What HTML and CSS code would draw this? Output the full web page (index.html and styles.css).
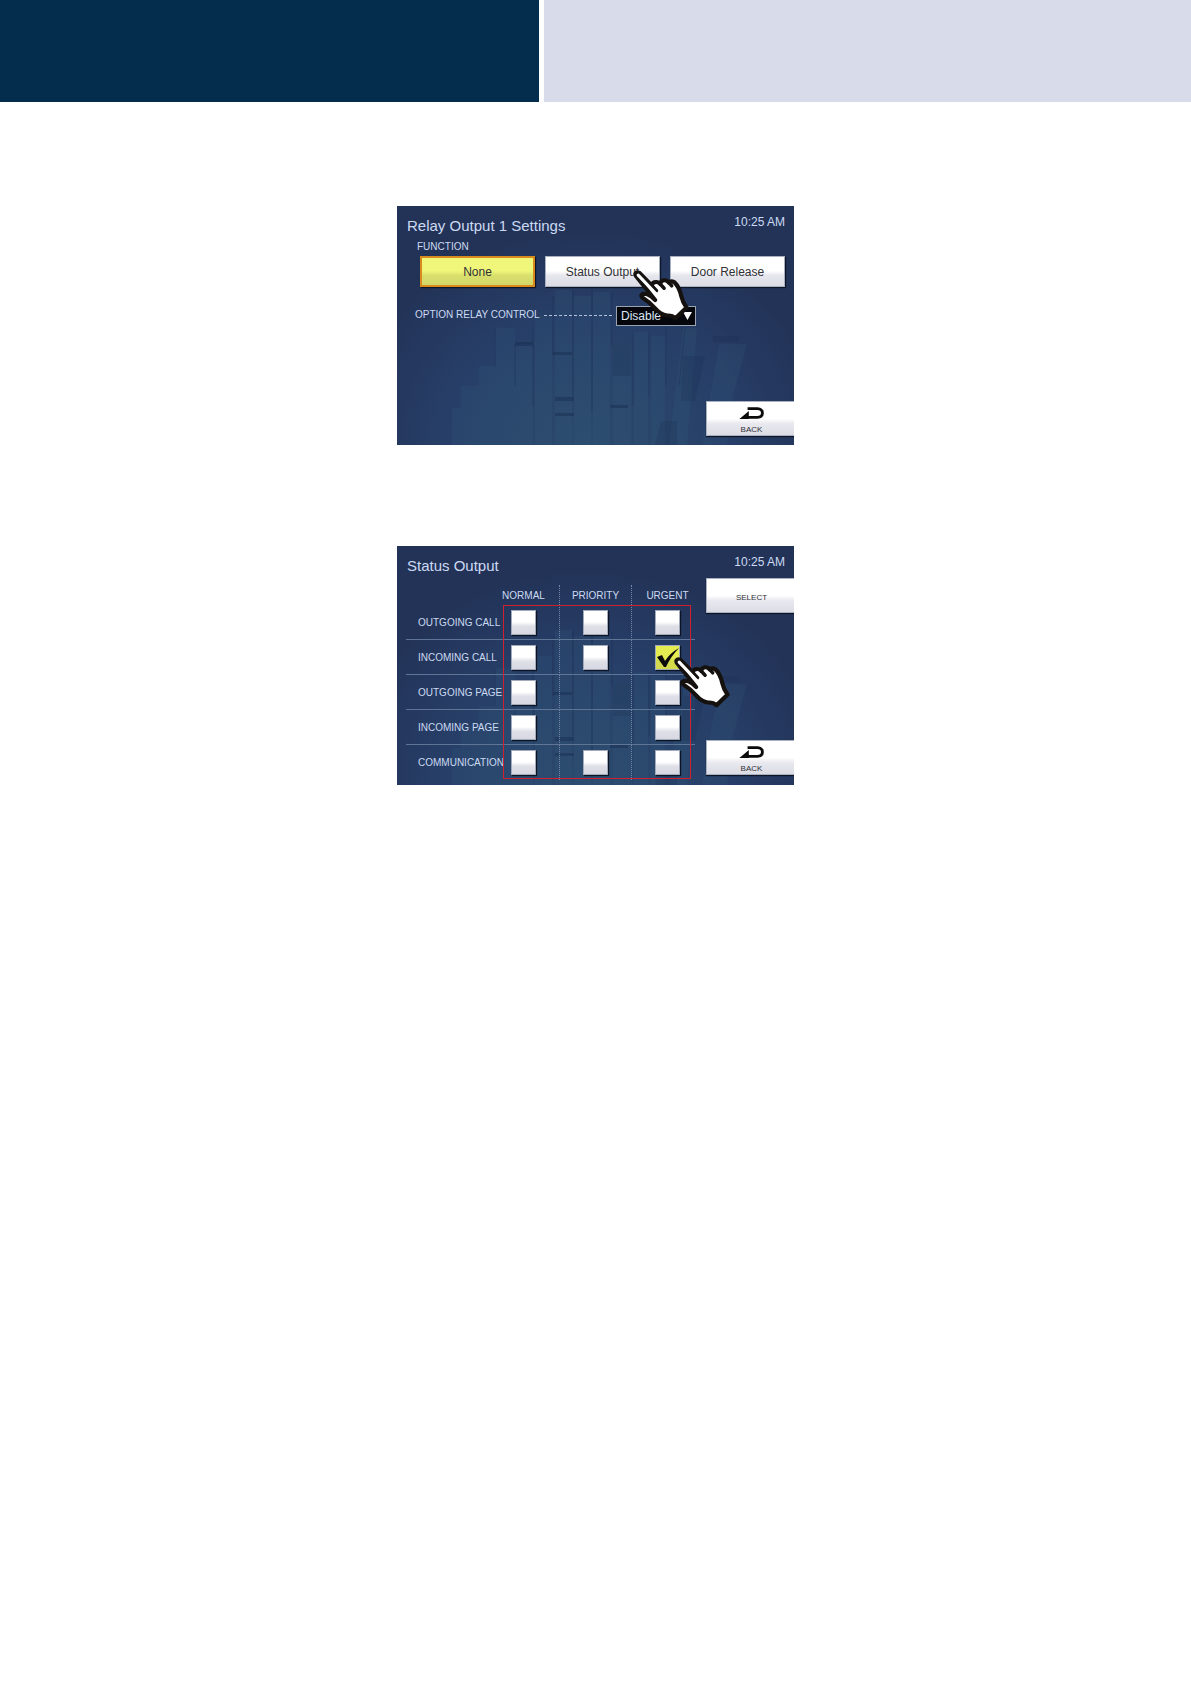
FILE: index.html
```html
<!DOCTYPE html>
<html lang="en">
<head>
<meta charset="utf-8">
<meta name="viewport" content="width=device-width, initial-scale=1">
<title>Relay Output Settings</title>
<link rel="stylesheet" href="styles.css">
</head>
<body>
<svg class="defs" aria-hidden="true">
  <symbol id="hand" viewBox="12 16 162 146">
    <path d="M20 32Q16 22 26 22Q31 22 35 28L66 60Q68 50 79 50Q87 50 90 55Q94 44 105 45Q112 46 115 51Q122 45 132 51Q146 64 152 92Q156 110 167 124L135 155Q126 146 110 147Q92 144 76 126Q60 108 38 94Q33 86 42 84Q54 84 64 91L76 102Z" fill="#fff" stroke="#15110f" stroke-width="12" stroke-linejoin="round"/>
    <path d="M66 60L80 75M90 55L102 68M115 51L124 61" fill="none" stroke="#15110f" stroke-width="10" stroke-linecap="round"/>
    <path d="M27 30L86 92" fill="none" stroke="#fff" stroke-width="9" stroke-linecap="round"/>
  </symbol>
  <symbol id="return" viewBox="146 50 80 38">
    <path d="M172 55H203Q219 56 219 69Q219 82 203 83H168" fill="none" stroke="#0b0b0b" stroke-width="9"/>
    <path d="M146 88L176 63V88Z" fill="#0b0b0b"/>
  </symbol>
  <symbol id="blocks" viewBox="0 0 397 239" preserveAspectRatio="none">
    <g fill="#3d6a8a" fill-opacity=".13">
      <path d="M55 239V202H64V180H82V160H98V122H118V239Z"/>
      <path d="M118 239V138H136V239ZM138 239V110H155V239ZM158 239V84H175V239ZM177 239V90H194V239Z"/>
      <path d="M196 239V86H213V239ZM216 239V138H234V239ZM237 239V126H251V239ZM254 239V130H268V239Z"/>
      <path d="M272 239L286 122H300L290 239ZM305 239L322 138H350L336 190L330 239Z"/>
    </g>
    <g fill="none" stroke="#16284a" stroke-opacity=".35">
      <path d="M98 122V160M118 138V180M136 120V200M156 90V150M176 84V190M195 80V205M215 86V140M236 128V200M252 126V190M269 120V180M288 122L282 180"/>
    </g>
    <g fill="#14284a" fill-opacity=".4">
      <path d="M118 136H136V140H118ZM156 146H175V149H156ZM158 191H177V195H158ZM158 207H177V210H158ZM213 199H231V202H213Z"/>
      <path d="M216 138H234V170H216ZM286 150H308L298 195H284ZM316 130H342V136H316ZM264 215H280V239H258Z" fill-opacity=".18"/>
    </g>
  </symbol>
</svg>

<header class="banner">
  <div class="banner-chapter"></div>
  <div class="banner-title"></div>
</header>

<main class="content">
  <section class="screen" aria-labelledby="relay-title">
    <svg class="backdrop" aria-hidden="true"><use href="#blocks"/></svg>
    <div class="screen-head">
      <h2 id="relay-title">Relay Output 1 Settings</h2>
      <time datetime="10:25">10:25 AM</time>
    </div>
    <h3 class="group-label" id="function-label">FUNCTION</h3>
    <div class="choices" role="group" aria-labelledby="function-label">
      <button class="choice selected" type="button">None</button>
      <button class="choice" type="button">Status Output</button>
      <button class="choice" type="button">Door Release</button>
    </div>
    <div class="option">
      <label for="relay-control">OPTION RELAY CONTROL</label>
      <span class="leader"></span>
      <span class="dropdown">
        <select id="relay-control"><option>Disable</option><option>Enable</option></select>
        <svg viewBox="0 0 10 9" aria-hidden="true"><path d="M0 0H10L5 9Z" fill="#fff"/></svg>
      </span>
    </div>
    <button class="side-button back" type="button"><svg aria-hidden="true"><use href="#return"/></svg>BACK</button>
    <svg class="pointer on-status" aria-hidden="true"><use href="#hand"/></svg>
  </section>

  <section class="screen" aria-labelledby="status-title">
    <svg class="backdrop" aria-hidden="true"><use href="#blocks"/></svg>
    <div class="screen-head">
      <h2 id="status-title">Status Output</h2>
      <time datetime="10:25">10:25 AM</time>
    </div>
    <div class="screen-body">
      <div class="matrix">
        <table>
          <colgroup><col class="col-label"><col class="col-state"><col class="col-state"><col></colgroup>
          <thead>
            <tr><td></td><th scope="col">NORMAL</th><th scope="col">PRIORITY</th><th scope="col">URGENT</th></tr>
          </thead>
          <tbody>
            <tr><th scope="row">OUTGOING CALL</th>
              <td><input type="checkbox" aria-label="Outgoing call, normal"></td>
              <td><input type="checkbox" aria-label="Outgoing call, priority"></td>
              <td><input type="checkbox" aria-label="Outgoing call, urgent"></td></tr>
            <tr><th scope="row">INCOMING CALL</th>
              <td><input type="checkbox" aria-label="Incoming call, normal"></td>
              <td><input type="checkbox" aria-label="Incoming call, priority"></td>
              <td><span class="tick"><input type="checkbox" aria-label="Incoming call, urgent" checked><svg viewBox="0 0 25 25" aria-hidden="true"><path d="M2 12L7 10L10 16Q15 8 24 3Q16 11 11 22H9Z" fill="#0b0b0b"/></svg></span></td></tr>
            <tr><th scope="row">OUTGOING PAGE</th>
              <td><input type="checkbox" aria-label="Outgoing page, normal"></td>
              <td></td>
              <td><input type="checkbox" aria-label="Outgoing page, urgent"></td></tr>
            <tr><th scope="row">INCOMING PAGE</th>
              <td><input type="checkbox" aria-label="Incoming page, normal"></td>
              <td></td>
              <td><input type="checkbox" aria-label="Incoming page, urgent"></td></tr>
            <tr><th scope="row">COMMUNICATION</th>
              <td><input type="checkbox" aria-label="Communication, normal"></td>
              <td><input type="checkbox" aria-label="Communication, priority"></td>
              <td><input type="checkbox" aria-label="Communication, urgent"></td></tr>
          </tbody>
        </table>
        <div class="highlight"></div>
      </div>
      <div class="side">
        <button class="side-button" type="button">SELECT</button>
        <button class="side-button" type="button"><svg aria-hidden="true"><use href="#return"/></svg>BACK</button>
      </div>
    </div>
    <svg class="pointer on-urgent" aria-hidden="true"><use href="#hand"/></svg>
  </section>
</main>
</body>
</html>
```
FILE: styles.css
```css
* { box-sizing: border-box; }

body {
  margin: 0;
  background: #fff;
  font-family: "Liberation Sans", Arial, sans-serif;
}

.defs { position: absolute; width: 0; height: 0; }

/* page banner */
.banner {
  display: grid;
  grid-template-columns: 539fr 647fr;
  gap: 5px;
  height: 102px;
}
.banner-chapter { background: #042d4d; }
.banner-title { background: #d7dbea; }

.content {
  display: flex;
  flex-direction: column;
  align-items: center;
  gap: 101px;
  padding: 104px 16px;
}

/* device screens */
.screen {
  position: relative;
  isolation: isolate;
  display: flex;
  flex-direction: column;
  width: 100%;
  max-width: 397px;
  min-height: 239px;
  overflow: hidden;
  color: #ccdaf2;
  background: radial-gradient(ellipse 60% 90% at 48% 100%, #2b4a6c, #273f68 60%, #233358);
}
.backdrop {
  position: absolute;
  inset: 0;
  z-index: -1;
  width: 100%;
  height: 100%;
}

.screen-head {
  display: flex;
  justify-content: space-between;
  padding: 9px 9px 0 10px;
}
.screen-head h2 {
  margin: 0;
  font-size: 15px;
  font-weight: 400;
  line-height: 22px;
}
.screen-head time { font-size: 12px; line-height: 14px; }

.group-label {
  margin: 4px 20px 3px;
  font-size: 10px;
  font-weight: 400;
  line-height: 12px;
}

.choices {
  display: grid;
  grid-template-columns: repeat(3, 1fr);
  gap: 10px;
  padding: 0 9px 0 23px;
}

button {
  font-family: inherit;
  color: #303036;
  cursor: pointer;
}

.choice {
  height: 31px;
  padding: 0;
  border: 1px solid #a9b0bf;
  background: linear-gradient(#fff 48%, #e6e6ed 64%, #dcdce5);
  box-shadow: 1px 1px 1px #0e1526;
  font-size: 12px;
}
.choice.selected {
  border: 2px solid #d98a1c;
  background: linear-gradient(#f0f67a 48%, #d9df6c 64%, #d2d769);
}

.option {
  display: flex;
  gap: 4px;
  margin-top: 19px;
  padding: 0 98px 0 18px;
  font-size: 10px;
  line-height: 17px;
}
.leader {
  flex: 1;
  height: 10px;
  border-bottom: 1px dashed #b4c2dc;
}
.dropdown { display: grid; width: 80px; }
.dropdown > * { grid-area: 1 / 1; }
.dropdown select {
  appearance: none;
  height: 20px;
  padding: 0 4px;
  border: 1px solid #9aa3b3;
  border-radius: 0;
  background: #05070c;
  color: #dfe7f5;
  font: 12px "Liberation Sans", Arial, sans-serif;
}
.dropdown svg {
  place-self: center end;
  width: 9px;
  height: 8px;
  margin-right: 4px;
  pointer-events: none;
}

.side-button {
  display: flex;
  flex-direction: column;
  align-items: center;
  justify-content: center;
  gap: 6px;
  width: 88px;
  height: 35px;
  padding: 3px 0 0 2px;
  border: 1px solid #a9b0bf;
  border-right: 0;
  background: linear-gradient(#fff 50%, #e8e8ef 66%, #dcdce5);
  box-shadow: 0 1px 1px #0e1526;
  font-size: 8px;
  line-height: 9px;
}
.side-button svg { width: 26px; height: 12px; }
.back { align-self: flex-end; margin: auto 0 9px; }

/* status matrix */
.screen-body { display: flex; justify-content: space-between; flex: 1; }
.matrix {
  position: relative;
  flex: 0 1 289px;
  margin: 8px 0 5px 9px;
}
table {
  width: 100%;
  table-layout: fixed;
  border-collapse: separate;
  border-spacing: 0;
  font-size: 10px;
}
.col-label { width: 82px; }
.col-state { width: 72px; }
th, td { padding: 0; font-weight: 400; text-align: center; white-space: nowrap; }
thead tr { height: 20px; }
tbody tr { height: 35px; }
tbody th { padding-left: 12px; text-align: left; }
tbody tr:not(:last-child) > * { border-bottom: 1px solid #5f7595; }
tr > :nth-child(2), tr > :nth-child(3) { border-right: 1px dotted #7488a8; }
tr > :last-child { padding-left: 8px; }

input[type="checkbox"] {
  appearance: none;
  display: block;
  width: 25px;
  height: 25px;
  margin: 0 auto;
  border: 1px solid #a3abba;
  background: linear-gradient(#fff 48%, #dfdfe8 66%, #d8d8e2);
  box-shadow: 1px 1px 1px #0c1424;
}
input[type="checkbox"]:checked { background: linear-gradient(#e4ec52 48%, #d3db4c 66%); }
.tick { display: grid; justify-content: center; }
.tick > * { grid-area: 1 / 1; }
.tick svg { width: 25px; height: 25px; pointer-events: none; }

.highlight {
  position: absolute;
  inset: 20px 4px 1px 97px;
  border: 1px solid #d02030;
  pointer-events: none;
}

.side {
  display: flex;
  flex-direction: column;
  justify-content: space-between;
  padding: 1px 0 10px;
}

/* pointing hand laid over the controls */
.pointer {
  position: absolute;
  width: 56px;
  height: 51px;
  pointer-events: none;
}
.on-status { left: 236px; top: 64px; }
.on-urgent { left: 277px; top: 111px; }
```
